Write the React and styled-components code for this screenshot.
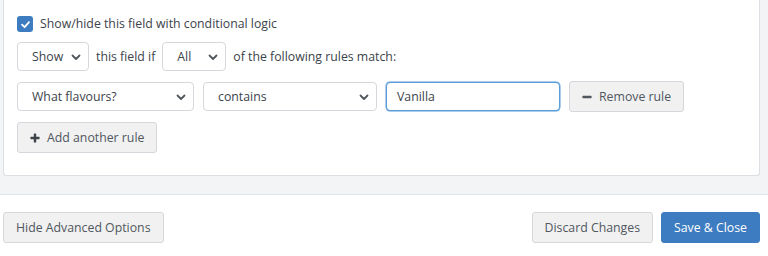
import React from 'react';
import styled, { createGlobalStyle } from 'styled-components';

const GlobalStyle = createGlobalStyle`
  html, body {
    margin: 0;
    padding: 0;
    background: #ffffff;
    font-family: "Open Sans", "Liberation Sans", sans-serif;
    font-size: 12.3px;
    color: #3c434a;
  }
  * { box-sizing: border-box; }
`;

const Advanced = styled.div`
  background: #f3f4f5;
  padding: 0 8px 18px 3px;
  border-bottom: 1px solid #dde3e8;
`;

const Panel = styled.div`
  background: #ffffff;
  border: 1px solid #dcdfe3;
  border-top: none;
  border-radius: 0 0 3px 3px;
  padding: 16px 13px 22px;
  display: flex;
  flex-direction: column;
  gap: 10px;
`;

const Row = styled.div`
  display: flex;
  align-items: center;
  gap: ${p => p.gap || 7}px;
`;

const CheckLabel = styled.label`
  display: flex;
  align-items: center;
  gap: 7px;
  height: 16px;
  line-height: 16px;
`;

const Box = styled.span`
  width: 16px;
  height: 16px;
  border-radius: 3px;
  background: #3d7cc0;
  display: flex;
  align-items: center;
  justify-content: center;
`;

const SelectBox = styled.div`
  width: ${p => p.w}px;
  height: 29px;
  border: 1px solid #d4d7db;
  border-radius: 4px;
  background: #fff;
  display: flex;
  align-items: center;
  justify-content: space-between;
  padding: 0 6px 0 ${p => p.pl || 14}px;
`;

const TextInput = styled.div`
  width: 174px;
  height: 29px;
  border: 1px solid #5b9dd9;
  border-radius: 4px;
  background: #fff;
  display: flex;
  align-items: center;
  padding: 0 10px;
  box-shadow: 0 0 0 0.5px #5b9dd9;
`;

const Button = styled.button`
  font-family: inherit;
  font-size: 12.3px;
  height: ${p => p.h || 31}px;
  padding: 0 ${p => p.px || 12}px;
  border-radius: 3px;
  border: 1px solid ${p => (p.primary ? '#3d7cc0' : '#d4d7db')};
  background: ${p => (p.primary ? '#3d7cc0' : '#f1f1f1')};
  color: ${p => (p.primary ? '#ffffff' : '#50575e')};
  display: flex;
  align-items: center;
  gap: 7px;
  cursor: pointer;
  white-space: nowrap;
`;

const Footer = styled.div`
  display: flex;
  align-items: center;
  padding: 17px 8px 0 3px;
  gap: 8px;
`;

const Spacer = styled.div`
  flex: 1;
`;

const Chevron = () => (
  <svg width="12" height="12" viewBox="0 0 12 12">
    <path d="M2.5 4.5 L6 8 L9.5 4.5" fill="none" stroke="#50575e" strokeWidth="1.8" strokeLinecap="round" strokeLinejoin="round" />
  </svg>
);

const Select = ({ w, pl, children }) => (
  <SelectBox w={w} pl={pl}>
    <span>{children}</span>
    <Chevron />
  </SelectBox>
);

const App = () => {
  return (
    <>
      <GlobalStyle />
      <Advanced>
        <Panel>
          <CheckLabel>
            <Box>
              <svg width="11" height="11" viewBox="0 0 12 12">
                <path d="M2.2 6.2 L5 8.9 L9.8 3.4" fill="none" stroke="#fff" strokeWidth="2" strokeLinecap="round" strokeLinejoin="round" />
              </svg>
            </Box>
            Show/hide this field with conditional logic
          </CheckLabel>
          <Row>
            <Select w={72}>Show</Select>
            <span>this field if</span>
            <Select w={64}>All</Select>
            <span>of the following rules match:</span>
          </Row>
          <Row gap={9}>
            <Select w={177}>What flavours?</Select>
            <Select w={174}>contains</Select>
            <TextInput>Vanilla</TextInput>
            <Button>
              <svg width="10" height="10" viewBox="0 0 10 10">
                <rect x="0.5" y="3.8" width="9" height="2.4" rx="0.5" fill="#50575e" />
              </svg>
              Remove rule
            </Button>
          </Row>
          <Row>
            <Button h={31} px={12}>
              <svg width="10" height="10" viewBox="0 0 10 10">
                <rect x="0.5" y="3.8" width="9" height="2.4" rx="0.5" fill="#3c434a" />
                <rect x="3.8" y="0.5" width="2.4" height="9" rx="0.5" fill="#3c434a" />
              </svg>
              Add another rule
            </Button>
          </Row>
        </Panel>
      </Advanced>
      <Footer>
        <Button>Hide Advanced Options</Button>
        <Spacer />
        <Button>Discard Changes</Button>
        <Button primary>Save &amp; Close</Button>
      </Footer>
    </>
  );
};

export default App;
